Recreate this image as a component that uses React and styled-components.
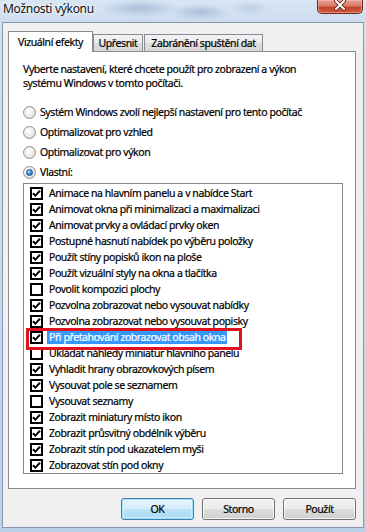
import React from 'react';
import styled, { createGlobalStyle } from 'styled-components';

const Global = createGlobalStyle`
  html, body { margin: 0; padding: 0; }
  body {
    width: 366px; height: 532px; overflow: hidden;
    background: #c8daee;
    font-family: "Noto Sans", "Open Sans", sans-serif;
    font-size: 10.5px;
    letter-spacing: -0.42px;
    color: #000;
    -webkit-text-stroke: 0.2px currentColor;
  }
`;

const Window = styled.div`
  width: 366px;
  height: 532px;
  display: flex;
  flex-direction: column;
  background: linear-gradient(to bottom, #d3e2f2 0%, #c6d8ed 60%, #bcd0e8 100%);
`;

const TitleBar = styled.div`
  height: 22px;
  flex: none;
  display: flex;
  align-items: flex-start;
  justify-content: space-between;
  background:
    radial-gradient(ellipse 40px 9px at 140px 8px, rgba(120,150,190,0.45), transparent),
    radial-gradient(ellipse 30px 8px at 200px 12px, rgba(110,140,180,0.4), transparent),
    radial-gradient(ellipse 20px 7px at 250px 8px, rgba(150,170,200,0.35), transparent),
    linear-gradient(to bottom, #d9e6f4, #cbdcef);
`;

const Title = styled.span`
  margin: 1px 0 0 3px;
  font-size: 12px;
  letter-spacing: -0.3px;
  line-height: 16px;
  color: #111;
  -webkit-text-stroke: 0;
  text-shadow: 0 0 6px #fff, 0 0 3px #fff;
`;

const CloseButton = styled.div`
  width: 46px;
  height: 14px;
  margin-right: 3px;
  box-sizing: border-box;
  border: 1px solid #6e2a20;
  border-top: none;
  border-radius: 0 0 5px 5px;
  background: linear-gradient(to bottom, #e6a394 0%, #d67964 45%, #c5452c 55%, #cf5a3c 100%);
  box-shadow: inset 0 0 0 1px rgba(255,200,180,0.5);
  display: flex;
  justify-content: center;
  align-items: flex-start;
`;

const Client = styled.div`
  flex: 1;
  margin: 0 2px 4px 2px;
  border: 1px solid #8797ab;
  background: #f0f0f0;
  display: flex;
  flex-direction: column;
`;

const TabRow = styled.div`
  margin-top: 8px;
  height: 21px;
  padding-left: 5px;
  display: flex;
  align-items: flex-end;
  position: relative;
  z-index: 1;
`;

const Tab = styled.div`
  box-sizing: border-box;
  width: ${p => p.$w}px;
  margin-left: ${p => p.$ml || 0}px;
  border: 1px solid #898c95;
  border-bottom: none;
  display: flex;
  align-items: center;
  justify-content: center;
  white-space: nowrap;
  ${p => p.$active ? `
    height: 21px;
    background: #fff;
    align-self: flex-start;
    padding-bottom: 1px;
  ` : `
    height: 17px;
    margin-bottom: 1px;
    background: linear-gradient(to bottom, #f3f3f3 0%, #ebebeb 50%, #dedede 51%, #d8d8d8 100%);
  `}
`;

const Panel = styled.div`
  margin: -1px 7px 0 5px;
  height: 438px;
  box-sizing: border-box;
  border: 1px solid #898c95;
  background: #fff;
  padding: 10px 13px 0 14px;
  display: flex;
  flex-direction: column;
`;

const Description = styled.p`
  margin: 0;
  line-height: 14px;
`;

const RadioGroup = styled.div`
  margin-top: 12px;
  display: flex;
  flex-direction: column;
`;

const RadioRow = styled.label`
  height: 20px;
  display: flex;
  align-items: center;
  gap: 4px;
`;

const RadioCircle = styled.span`
  width: 13px;
  height: 13px;
  box-sizing: border-box;
  border-radius: 50%;
  border: 1px solid #8e8f8f;
  background: radial-gradient(circle at 40% 35%, #ffffff 0%, #ececec 50%, #d0d0d0 100%);
  display: flex;
  align-items: center;
  justify-content: center;
  flex: none;
  &::after {
    content: "";
    display: ${p => p.$checked ? 'block' : 'none'};
    width: 7px;
    height: 7px;
    box-sizing: border-box;
    border-radius: 50%;
    border: 1px solid #1a4f8e;
    background: radial-gradient(circle at 40% 35%, #b7dcfb 0%, #3c8fdc 50%, #0f4f9c 100%);
  }
`;

const ListBox = styled.div`
  margin-top: 1px;
  width: 320px;
  height: 291px;
  box-sizing: border-box;
  border: 1px solid #828790;
  padding-top: 1px;
  background: #fff;
  display: flex;
  flex-direction: column;
`;

const ItemRow = styled.div`
  position: relative;
  height: 16px;
  flex: none;
  display: flex;
  align-items: center;
  padding-left: 6px;
  white-space: nowrap;
`;

const CheckBox = styled.span`
  width: 13px;
  height: 13px;
  box-sizing: border-box;
  border: 2px solid #000;
  background: #fff;
  flex: none;
  display: flex;
  align-items: center;
  justify-content: center;
`;

const ItemText = styled.span`
  margin-left: 4px;
  padding: 0 2px;
  line-height: 14px;
  ${p => p.$selected ? `background: #3399ff; color: #fff;` : ''}
`;

const Highlight = styled.div`
  position: absolute;
  left: 2px;
  top: -1px;
  width: 216px;
  height: 22px;
  box-sizing: border-box;
  border: 3px solid #e0121d;
  z-index: 2;
  pointer-events: none;
`;

const ButtonRow = styled.div`
  margin-top: 9px;
  padding-right: 7px;
  display: flex;
  justify-content: flex-end;
  gap: 8px;
`;

const Button = styled.button`
  width: 73px;
  height: 22px;
  box-sizing: border-box;
  font-family: inherit;
  font-size: 10.5px;
  letter-spacing: inherit;
  -webkit-text-stroke: inherit;
  color: #000;
  padding: 0;
  border-radius: 3px;
  ${p => p.$default ? `
    border: 1px solid #3c7fb1;
    background: linear-gradient(to bottom, #e5f4fc 0%, #d4ecf9 50%, #bde2f7 51%, #a9d9f5 100%);
    box-shadow: inset 0 0 0 1px #9be1fb, inset 0 0 0 2px rgba(255,255,255,0.35);
  ` : `
    border: 1px solid #707070;
    background: linear-gradient(to bottom, #f2f2f2 0%, #ebebeb 50%, #dddddd 51%, #cfcfcf 100%);
    box-shadow: inset 0 0 0 1px rgba(255,255,255,0.8);
  `}
`;

const items = [
  ['Animace na hlavním panelu a v nabídce Start', true],
  ['Animovat okna při minimalizaci a maximalizaci', true],
  ['Animovat prvky a ovládací prvky oken', true],
  ['Postupné hasnutí nabídek po výběru položky', true],
  ['Použít stíny popisků ikon na ploše', true],
  ['Použít vizuální styly na okna a tlačítka', true],
  ['Povolit kompozici plochy', false],
  ['Pozvolna zobrazovat nebo vysouvat nabídky', true],
  ['Pozvolna zobrazovat nebo vysouvat popisky', true],
  ['Při přetahování zobrazovat obsah okna', true, true],
  ['Ukládat náhledy miniatur hlavního panelu', false],
  ['Vyhladit hrany obrazovkových písem', true],
  ['Vysouvat pole se seznamem', true],
  ['Vysouvat seznamy', false],
  ['Zobrazit miniatury místo ikon', true],
  ['Zobrazit průsvitný obdélník výběru', true],
  ['Zobrazit stín pod ukazatelem myši', true],
  ['Zobrazovat stín pod okny', true],
];

const radios = [
  ['Systém Windows zvolí nejlepší nastavení pro tento počítač', false],
  ['Optimalizovat pro vzhled', false],
  ['Optimalizovat pro výkon', false],
  ['Vlastní:', true],
];

const Check = () => (
  <svg width="9" height="9" viewBox="0 0 9 9">
    <polyline points="1,4.2 3.3,6.6 8,1.8" fill="none" stroke="#000" strokeWidth="2" />
  </svg>
);

export default function App() {
  return (
    <>
      <Global />
      <Window>
        <TitleBar>
          <Title>Možnosti výkonu</Title>
          <CloseButton>
            <svg width="14" height="11" viewBox="0 0 14 11">
              <path d="M3 1 L11 9 M11 1 L3 9" stroke="#5a1e16" strokeWidth="3.6" strokeLinecap="round" />
              <path d="M3 1 L11 9 M11 1 L3 9" stroke="#fff" strokeWidth="2" strokeLinecap="round" />
            </svg>
          </CloseButton>
        </TitleBar>
        <Client>
          <TabRow>
            <Tab $w={85} $active>Vizuální efekty</Tab>
            <Tab $w={50}>Upřesnit</Tab>
            <Tab $w={119} $ml={1}>Zabránění spuštění dat</Tab>
          </TabRow>
          <Panel>
            <Description>
              Vyberte nastavení, které chcete použít pro zobrazení a výkon<br />
              systému Windows v tomto počítači.
            </Description>
            <RadioGroup>
              {radios.map(([t, c]) => (
                <RadioRow key={t}>
                  <RadioCircle $checked={c} />
                  <span>{t}</span>
                </RadioRow>
              ))}
            </RadioGroup>
            <ListBox>
              {items.map(([t, c, sel]) => (
                <ItemRow key={t}>
                  <CheckBox>{c && <Check />}</CheckBox>
                  <ItemText $selected={sel}>{t}</ItemText>
                  {sel && <Highlight />}
                </ItemRow>
              ))}
            </ListBox>
          </Panel>
          <ButtonRow>
            <Button $default>OK</Button>
            <Button>Storno</Button>
            <Button>Použít</Button>
          </ButtonRow>
        </Client>
      </Window>
    </>
  );
}
